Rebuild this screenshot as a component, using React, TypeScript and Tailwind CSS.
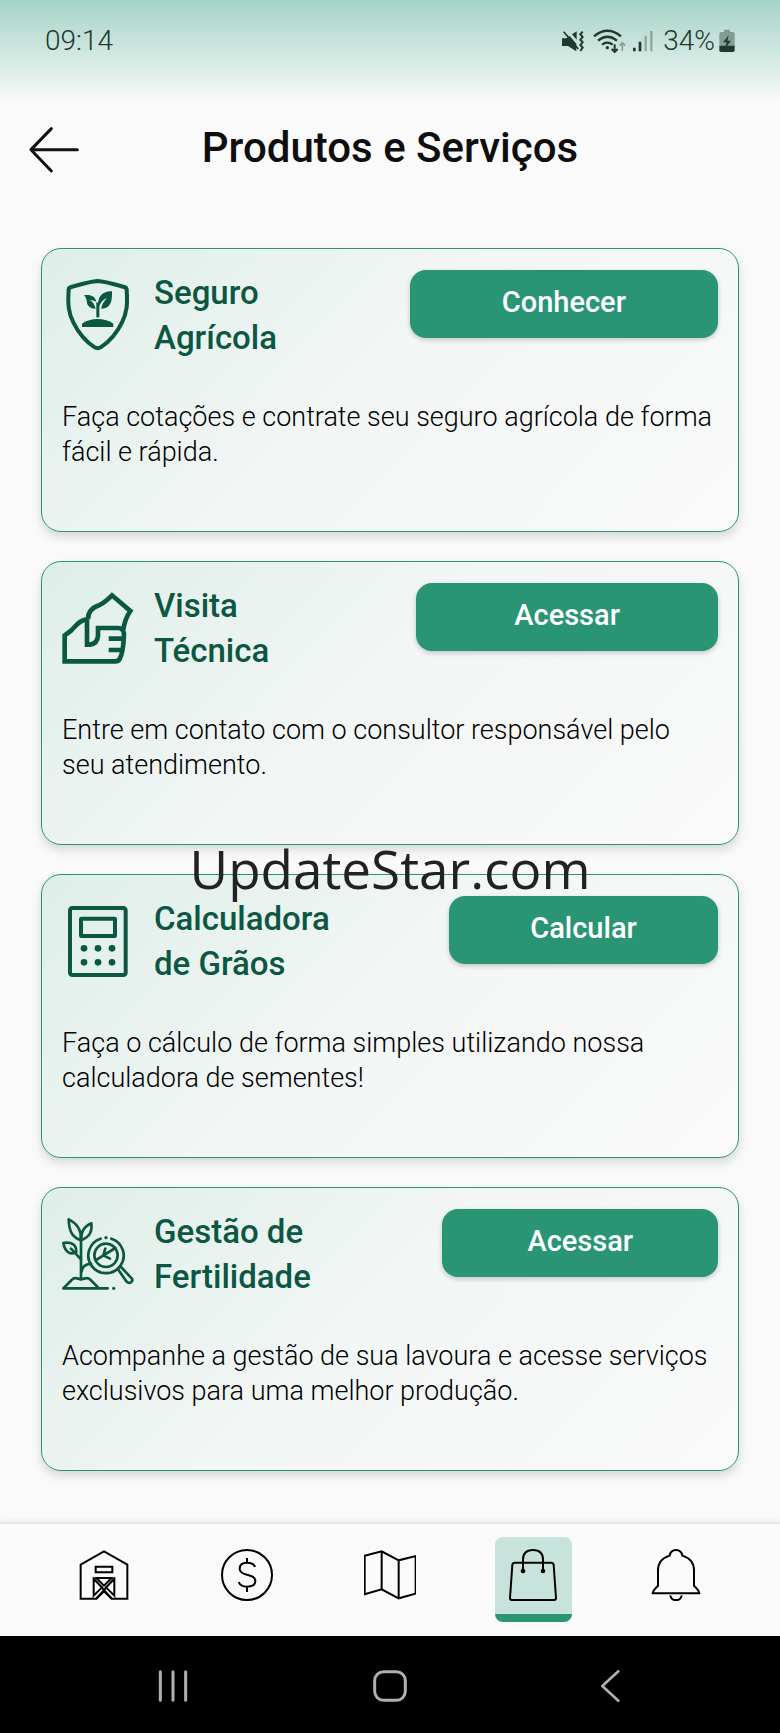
import type { ReactNode } from "react";

type Service = {
  title: string;
  description: string;
  action: string;
  buttonWidth: string;
  icon: ReactNode;
};

function ShieldIcon() {
  return (
    <svg viewBox="0 0 216 216" className="size-18 shrink-0" fill="currentColor" aria-hidden="true">
      <path
        d="M107 6C80 8 50 18 27 24Q20 26 20 33C17 75 19 100 34 130C50 163 75 190 98 205Q107 210 116 205C139 190 164 163 180 130C195 100 197 75 194 33Q194 26 187 24C164 18 134 8 107 6Z"
        fill="none"
        stroke="currentColor"
        strokeWidth="12"
      />
      <path d="M66 49C86 46 99 52 103 68C98 66 90 62 84 63C92 68 98 78 101 89C80 89 74 76 74 63Q72 54 66 49Z" />
      <path d="M150 37C151 66 146 90 118 89C118 77 128 65 135 57C121 63 114 74 111 84C103 56 120 36 150 37Z" />
      <path d="M103 70H112V115H103Z" />
      <path d="M60 144V134Q80 120 107 120T154 134V144Z" />
    </svg>
  );
}

function VisitIcon() {
  return (
    <svg
      viewBox="0 0 216 216"
      className="size-18 shrink-0"
      fill="none"
      stroke="currentColor"
      strokeWidth="14"
      aria-hidden="true"
    >
      <path d="M78 82C54 82 42 101 26 117L8 130V208H160Q169 208 173 201C181 188 185 155 186 126Q185 108 168 108H108V132Q106 155 84 158H75V82" />
      <path d="M78 82C78 58 93 45 113 39Q130 30 150 10L205 57Q189 80 184 112M140 140H186M140 174H180" />
    </svg>
  );
}

function CalculatorIcon() {
  return (
    <svg viewBox="0 0 216 216" className="size-18 shrink-0" fill="currentColor" aria-hidden="true">
      <g fill="none" stroke="currentColor" strokeWidth="12">
        <rect x="24" y="9" width="167" height="201" rx="7" />
        <rect x="57" y="41" width="102" height="52" rx="1" />
      </g>
      <circle cx="66" cy="130" r="10" />
      <circle cx="108" cy="130" r="10" />
      <circle cx="150" cy="130" r="10" />
      <circle cx="66" cy="172" r="10" />
      <circle cx="108" cy="172" r="10" />
      <circle cx="150" cy="172" r="10" />
    </svg>
  );
}

function FertilityIcon() {
  return (
    <svg viewBox="0 0 216 216" className="size-18 shrink-0" fill="none" aria-hidden="true">
      <g stroke="currentColor" strokeWidth="8" strokeLinecap="round" strokeLinejoin="round">
        <path d="M4 211H137M4 211L29 186Q35 179 45 181L57 184L70 181Q79 179 86 186L111 211" />
        <path d="M57 45V183" />
        <path d="M20 4C21 36 28 57 57 67C59 37 45 16 20 4ZM88 16C64 27 57 42 57 67C84 56 91 41 88 16Z" />
        <path d="M4 75C29 71 43 79 43 102C28 112 9 104 4 75ZM27 92L57 124M59 160Q61 140 87 137" />
        <path d="M116 62A53 53 0 1 0 148 62" />
        <circle cx="132" cy="112" r="35" />
        <path d="M104 125L160 90M124 112L130 92M124 112L144 122" />
        <path d="M168 154L194 191Q200 197 207 193Q214 187 209 181L177 147" />
      </g>
      <circle cx="132" cy="59" r="5" fill="currentColor" />
      <circle cx="155" cy="211" r="5" fill="currentColor" />
    </svg>
  );
}

const services: Service[] = [
  {
    title: "Seguro Agrícola",
    description: "Faça cotações e contrate seu seguro agrícola de forma fácil e rápida.",
    action: "Conhecer",
    buttonWidth: "w-[47%]",
    icon: <ShieldIcon />,
  },
  {
    title: "Visita Técnica",
    description: "Entre em contato com o consultor responsável pelo seu atendimento.",
    action: "Acessar",
    buttonWidth: "w-[46%]",
    icon: <VisitIcon />,
  },
  {
    title: "Calculadora de Grãos",
    description: "Faça o cálculo de forma simples utilizando nossa calculadora de sementes!",
    action: "Calcular",
    buttonWidth: "w-[41%]",
    icon: <CalculatorIcon />,
  },
  {
    title: "Gestão de Fertilidade",
    description: "Acompanhe a gestão de sua lavoura e acesse serviços exclusivos para uma melhor produção.",
    action: "Acessar",
    buttonWidth: "w-[42%]",
    icon: <FertilityIcon />,
  },
];

const tabs: { label: string; active?: boolean; drawing: ReactNode }[] = [
  {
    label: "Início",
    drawing: (
      <>
        <path d="M8 47L78 7L148 47V149H101L78 127L55 149H8Z" />
        <path d="M53 53H103V70H53ZM55 87H101L78 110ZM47 90V140L72 115ZM109 90V140L84 115ZM47 88L101 149M109 88L55 149" />
      </>
    ),
  },
  {
    label: "Financeiro",
    drawing: (
      <>
        <circle cx="78" cy="78" r="75" />
        <path d="M78 27V42M78 112V129M102 54C99 44 91 41 78 41C62 41 56 49 56 59C56 70 65 74 78 77C93 80 103 84 103 96C103 107 94 113 78 113C64 113 57 109 53 99" />
      </>
    ),
  },
  {
    label: "Mapa",
    drawing: <path d="M2 20L53 7L104 34L155 21V134L104 148L53 121L2 136ZM53 7V121M104 34V148" />,
  },
  {
    label: "Produtos",
    active: true,
    drawing: (
      <>
        <path d="M24 41H132Q139 41 140 48L147 147Q147 153 141 153H15Q9 153 9 147L16 48Q17 41 24 41Z" />
        <path d="M48 66V32C48 12 60 3 78 3S108 12 108 32V66" />
        <circle cx="48" cy="66" r="4" fill="currentColor" />
        <circle cx="108" cy="66" r="4" fill="currentColor" />
      </>
    ),
  },
  {
    label: "Notificações",
    drawing: (
      <>
        <path d="M59 20C61 8 68 3 78 3S95 8 97 20C119 27 132 42 132 64V110C138 118 148 122 148 133H8C8 122 18 118 24 110V64C24 42 37 27 59 20Z" />
        <path d="M61 139C64 158 92 158 95 139" />
      </>
    ),
  },
];

function StatusIcons() {
  return (
    <svg viewBox="0 0 276 72" className="h-6 w-23" fill="none" stroke="currentColor" aria-hidden="true">
      <path d="M3 28H16L26 21L46 44V67L21 51H3ZM33 16L47 7V32Z" fill="currentColor" stroke="none" />
      <path d="M8 8L52 60" strokeWidth="5" />
      <path d="M65 8L58 16L65 24L58 32L65 40L58 48L65 56L58 66" strokeWidth="6" />
      <g strokeWidth="7">
        <path d="M99 22Q139 -12 180 22M111 35Q139 11 168 35M123 47Q139 35 155 47" />
      </g>
      <circle cx="139" cy="56" r="5" fill="currentColor" stroke="none" />
      <path d="M161 46V67M152 60L161 69L170 60" strokeWidth="6" />
      <path d="M184 65V43M176 50L184 41L192 50" strokeWidth="5" opacity="0.4" />
      <path d="M220 67V56M237 67V38" strokeWidth="8" />
      <path d="M254 67V20M271 67V6" strokeWidth="7" opacity="0.35" />
    </svg>
  );
}

function StatusBar() {
  return (
    <div className="flex h-26 items-start justify-between bg-linear-to-b from-[#a5d3c7] via-[#cfe7e0] to-[#fafafa] pt-[25px] pr-[45px] pl-[45px] font-[Roboto,sans-serif] text-[28px] leading-8 font-light text-[#20382f]">
      <span>09:14</span>
      <div className="flex items-center gap-[10px]">
        <StatusIcons />
        <div className="flex items-center gap-1">
          <span>34%</span>
          <svg viewBox="0 0 48 72" className="h-6 w-4" aria-hidden="true">
            <path d="M15 2H33V9H42Q47 9 47 15V52H1V15Q1 9 6 9H15Z" fill="currentColor" opacity="0.4" />
            <path d="M1 50H47V64Q47 69 42 69H6Q1 69 1 64Z" fill="currentColor" />
            <path d="M29 19L12 40H23L18 58L36 35H25Z" fill="currentColor" />
          </svg>
        </div>
      </div>
    </div>
  );
}

function ServiceCard({ title, description, action, buttonWidth, icon }: Service) {
  return (
    <article className="min-h-71 rounded-[20px] border border-[#2a9474] bg-linear-135 from-[#deeee9] via-[#f2f6f5] via-45% to-[#fafafa] px-5 pt-[21px] pb-5 shadow-[0_5px_10px_rgba(70,85,100,0.2)]">
      <div className="flex items-start justify-between">
        <div className="flex items-center gap-5 text-[#0b5741]">
          {icon}
          <h2 className="w-min text-[33px] leading-[45px] font-medium">{title}</h2>
        </div>
        <button
          type="button"
          className={`${buttonWidth} h-17 rounded-2xl bg-[#2a9575] pb-[2px] text-[29px] font-medium text-white shadow-[0_2px_5px_rgba(0,0,0,0.2)]`}
        >
          {action}
        </button>
      </div>
      <p className="mt-10 text-[27px] leading-[35px] font-light text-black">{description}</p>
    </article>
  );
}

export default function App() {
  return (
    <div className="relative flex min-h-screen flex-col bg-[#fafafa] font-[Roboto,sans-serif]">
      <StatusBar />

      <header className="grid grid-cols-[1fr_auto_1fr] items-center px-7 pt-[18px] pb-[74px]">
        <button type="button" aria-label="Voltar" className="w-14">
          <svg viewBox="0 0 168 156" className="h-13 w-14" fill="none" stroke="#111" strokeWidth="9" strokeLinecap="round" strokeLinejoin="round">
            <path d="M9 83H148M70 20L9 83L70 147" />
          </svg>
        </button>
        <h1 className="text-[42px] leading-[52px] font-medium text-[#0e0e0e]">Produtos e Serviços</h1>
      </header>

      <main className="flex flex-1 flex-col gap-[29px] px-[41px] pb-[51px]">
        {services.map((service) => (
          <ServiceCard key={service.title} {...service} />
        ))}
      </main>

      <nav className="flex border-t-2 border-[#e5e5e5] bg-[#fafafa] px-8 pt-[13px] pb-[14px] shadow-[0_-2px_6px_rgba(0,0,0,0.05)]">
        {tabs.map((tab) => (
          <div key={tab.label} className="flex flex-1 justify-center">
            <a
              href="#"
              aria-label={tab.label}
              aria-current={tab.active ? "page" : undefined}
              className={
                tab.active
                  ? "flex h-[85px] w-[77px] justify-center rounded-lg border-b-8 border-[#2a9575] bg-[#c8e3dc] pt-3"
                  : "flex h-[85px] w-[77px] justify-center pt-3"
              }
            >
              <svg viewBox="0 0 156 156" className="size-13" fill="none" stroke="currentColor" strokeWidth="6" aria-hidden="true">
                {tab.drawing}
              </svg>
            </a>
          </div>
        ))}
      </nav>

      <div className="flex h-[97px] items-center bg-black px-16 pt-[2px] text-[#b0b0b0]">
        <button type="button" aria-label="Recentes" className="flex flex-1 justify-center">
          <svg viewBox="0 0 96 96" className="size-8" stroke="currentColor" strokeWidth="9" strokeLinecap="round">
            <path d="M10 5V91M48 5V91M86 5V91" />
          </svg>
        </button>
        <button type="button" aria-label="Tela inicial" className="flex flex-1 justify-center">
          <svg viewBox="0 0 102 96" className="h-8 w-[34px]" fill="none" stroke="currentColor" strokeWidth="9">
            <rect x="5" y="5" width="92" height="86" rx="27" />
          </svg>
        </button>
        <button type="button" aria-label="Voltar ao app anterior" className="flex flex-1 justify-center">
          <svg viewBox="0 0 96 96" className="size-8" fill="none" stroke="currentColor" strokeWidth="8" strokeLinecap="round" strokeLinejoin="round">
            <path d="M82 4L34 48L82 92" />
          </svg>
        </button>
      </div>

      <div className="pointer-events-none absolute inset-0 flex items-center justify-center pt-1 font-['Open_Sans',sans-serif] text-[53px] text-[#222]">
        UpdateStar.com
      </div>
    </div>
  );
}
